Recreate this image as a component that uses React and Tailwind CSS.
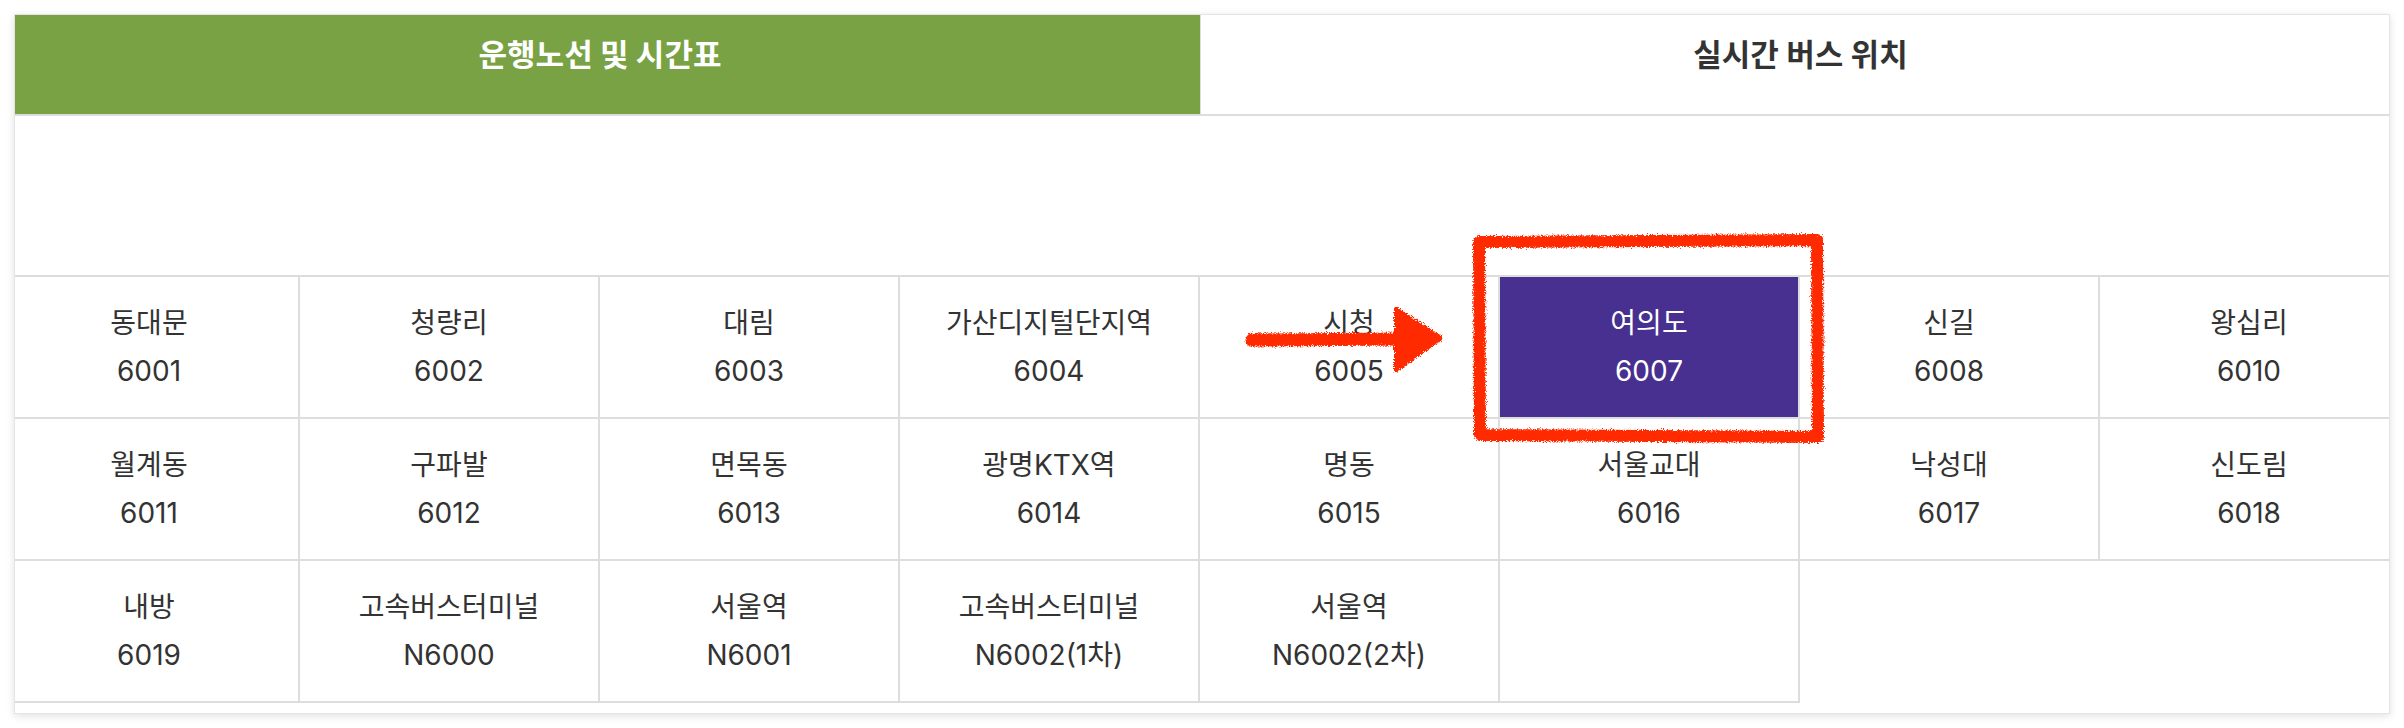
import React from "react";

const stops = [
  { name: "동대문", no: "6001" },
  { name: "청량리", no: "6002" },
  { name: "대림", no: "6003" },
  { name: "가산디지털단지역", no: "6004" },
  { name: "시청", no: "6005" },
  { name: "여의도", no: "6007", active: true },
  { name: "신길", no: "6008" },
  { name: "왕십리", no: "6010" },
  { name: "월계동", no: "6011" },
  { name: "구파발", no: "6012" },
  { name: "면목동", no: "6013" },
  { name: "광명KTX역", no: "6014" },
  { name: "명동", no: "6015" },
  { name: "서울교대", no: "6016" },
  { name: "낙성대", no: "6017" },
  { name: "신도림", no: "6018" },
  { name: "내방", no: "6019" },
  { name: "고속버스터미널", no: "N6000" },
  { name: "서울역", no: "N6001" },
  { name: "고속버스터미널", no: "N6002(1차)" },
  { name: "서울역", no: "N6002(2차)" },
  { name: "", no: "" },
];

// red marker drawn on top of the screenshot
const Annotation = () => (
  <svg className="absolute left-0 top-0 pointer-events-none" width="2404" height="728" viewBox="0 0 2404 728">
    <defs>
      <filter id="rough" x="-5%" y="-5%" width="110%" height="110%">
        <feTurbulence type="fractalNoise" baseFrequency="1.2" numOctaves="3" seed="7" result="n" />
        <feDisplacementMap in="SourceGraphic" in2="n" scale="6" xChannelSelector="R" yChannelSelector="G" />
      </filter>
    </defs>
    <g filter="url(#rough)" fill="none" stroke="#ff2a00" strokeLinejoin="round">
      <path d="M1479 242 L1817 240 L1818 437 L1480 435 Z" strokeWidth="12" />
      <path d="M1252 340 L1402 339" strokeWidth="13" strokeLinecap="round" />
      <path d="M1396 309 L1441 338 L1396 370 Z" fill="#ff2a00" strokeWidth="4" />
    </g>
  </svg>
);

export default function App() {
  return (
    <div className="relative w-[2404px] h-[728px] bg-white pt-[14px] pl-[14px] font-['Inter','Noto_Sans_CJK_KR',sans-serif]">
      <div className="w-[2376px] border border-[#e4e4e4] shadow-[0_2px_8px_rgba(0,0,0,0.12)] overflow-hidden pb-[10px]">
        <div className="w-[2400px] -ml-[15px]">
          {/* tabs */}
          <div className="flex h-[101px] border-b-2 border-[#dddddd]">
            <div className="w-[1200px] bg-[#79a244] text-white text-[31px] font-bold leading-[45px] pt-[17px] text-center">
              운행노선 및 시간표
            </div>
            <div className="w-[1200px] border-l border-[#dddddd] text-[#333333] text-[31px] font-bold leading-[45px] pt-[17px] text-center">
              실시간 버스 위치
            </div>
          </div>

          <div className="h-[159px]" />

          {/* route list */}
          <div className="grid grid-cols-[repeat(8,300px)] border-t-2 border-[#dddddd]">
            {stops.map((s, i) => (
              <div
                key={i}
                className={
                  s.active
                    ? "h-[142px] border-r-2 border-b-2 border-[#dddddd] bg-[#47308f] text-white flex flex-col items-center justify-center text-[28px] leading-[48px]"
                    : "h-[142px] border-r-2 border-b-2 border-[#dddddd] text-[#333333] flex flex-col items-center justify-center text-[28px] leading-[48px]"
                }
              >
                <span>{s.name}</span>
                <span>{s.no}</span>
              </div>
            ))}
          </div>
        </div>
      </div>
      <Annotation />
    </div>
  );
}
